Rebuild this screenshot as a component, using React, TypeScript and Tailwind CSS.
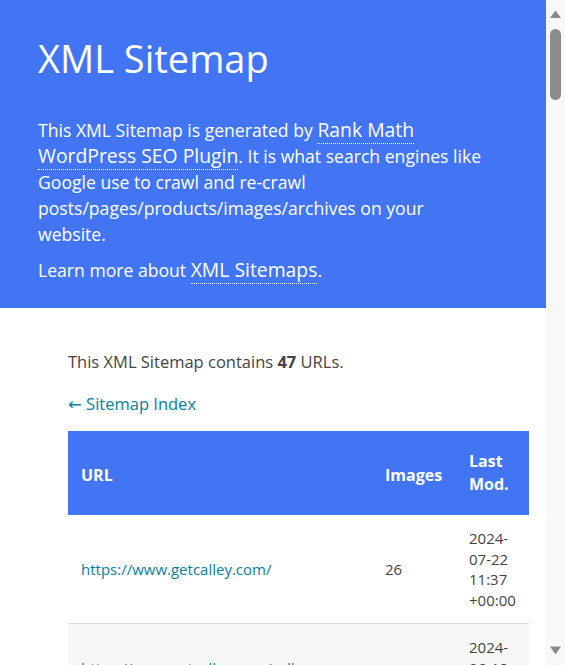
const urls: [string, number, string][] = [
  ["https://www.getcalley.com/", 26, "2024-07-22 11:37 +00:00"],
  ["https://www.getcalley.com/calley-autodialer-features/", 14, "2024-06-18 09:12 +00:00"],
  ["https://www.getcalley.com/pricing/", 3, "2024-07-10 07:45 +00:00"],
  ["https://www.getcalley.com/features/", 18, "2024-05-29 12:03 +00:00"],
  ["https://www.getcalley.com/contact-us/", 2, "2024-04-16 10:21 +00:00"],
  ["https://www.getcalley.com/about-us/", 6, "2024-04-16 10:24 +00:00"],
  ["https://www.getcalley.com/power-dialer/", 9, "2024-06-02 08:50 +00:00"],
  ["https://www.getcalley.com/call-center-software/", 11, "2024-06-05 14:16 +00:00"],
  ["https://www.getcalley.com/cold-calling-software/", 8, "2024-05-11 06:33 +00:00"],
  ["https://www.getcalley.com/telecalling-software/", 7, "2024-05-14 11:09 +00:00"],
  ["https://www.getcalley.com/call-tracking/", 5, "2024-03-27 13:42 +00:00"],
  ["https://www.getcalley.com/call-recording/", 4, "2024-03-27 13:48 +00:00"],
  ["https://www.getcalley.com/lead-management/", 6, "2024-03-30 09:55 +00:00"],
  ["https://www.getcalley.com/sales-dialer/", 7, "2024-02-19 07:14 +00:00"],
  ["https://www.getcalley.com/auto-dialer-for-android/", 10, "2024-02-22 10:38 +00:00"],
  ["https://www.getcalley.com/auto-dialer-for-iphone/", 9, "2024-02-22 10:41 +00:00"],
  ["https://www.getcalley.com/whatsapp-integration/", 5, "2024-01-30 12:27 +00:00"],
  ["https://www.getcalley.com/zapier-integration/", 4, "2024-01-30 12:31 +00:00"],
  ["https://www.getcalley.com/api-documentation/", 1, "2024-01-12 08:02 +00:00"],
  ["https://www.getcalley.com/team-management/", 6, "2024-01-08 15:19 +00:00"],
  ["https://www.getcalley.com/reports-and-analytics/", 8, "2023-12-21 09:47 +00:00"],
  ["https://www.getcalley.com/call-scripts/", 3, "2023-12-14 11:26 +00:00"],
  ["https://www.getcalley.com/voicemail-drop/", 3, "2023-12-14 11:30 +00:00"],
  ["https://www.getcalley.com/sms-and-email/", 4, "2023-11-28 06:58 +00:00"],
  ["https://www.getcalley.com/real-estate/", 5, "2023-11-20 10:12 +00:00"],
  ["https://www.getcalley.com/insurance/", 5, "2023-11-20 10:15 +00:00"],
  ["https://www.getcalley.com/education/", 5, "2023-11-20 10:18 +00:00"],
  ["https://www.getcalley.com/healthcare/", 4, "2023-11-20 10:21 +00:00"],
  ["https://www.getcalley.com/banking-and-finance/", 4, "2023-11-20 10:24 +00:00"],
  ["https://www.getcalley.com/customer-stories/", 12, "2023-10-31 13:05 +00:00"],
  ["https://www.getcalley.com/faq/", 1, "2023-10-17 07:36 +00:00"],
  ["https://www.getcalley.com/help-center/", 2, "2023-10-17 07:40 +00:00"],
  ["https://www.getcalley.com/video-tutorials/", 15, "2023-10-09 12:53 +00:00"],
  ["https://www.getcalley.com/download/", 2, "2023-09-25 09:08 +00:00"],
  ["https://www.getcalley.com/free-trial/", 1, "2023-09-25 09:11 +00:00"],
  ["https://www.getcalley.com/partner-program/", 3, "2023-09-12 14:27 +00:00"],
  ["https://www.getcalley.com/affiliate-program/", 3, "2023-09-12 14:30 +00:00"],
  ["https://www.getcalley.com/careers/", 2, "2023-08-29 08:44 +00:00"],
  ["https://www.getcalley.com/blog/", 0, "2023-08-16 11:02 +00:00"],
  ["https://www.getcalley.com/compare/", 6, "2023-08-03 10:19 +00:00"],
  ["https://www.getcalley.com/integrations/", 9, "2023-07-24 12:40 +00:00"],
  ["https://www.getcalley.com/security/", 1, "2023-07-11 07:57 +00:00"],
  ["https://www.getcalley.com/privacy-policy/", 0, "2023-06-28 06:15 +00:00"],
  ["https://www.getcalley.com/terms-of-service/", 0, "2023-06-28 06:18 +00:00"],
  ["https://www.getcalley.com/refund-policy/", 0, "2023-06-28 06:21 +00:00"],
  ["https://www.getcalley.com/gdpr/", 0, "2023-06-28 06:24 +00:00"],
  ["https://www.getcalley.com/sitemap/", 0, "2023-06-15 09:33 +00:00"],
]

function Scrollbar() {
  return (
    <div className="flex w-[19px] shrink-0 flex-col bg-[#f8f8f8]">
      <svg width="19" height="19" viewBox="0 0 19 19" className="shrink-0">
        <polygon points="4,18 15,18 9.5,10.5" fill="#8a8a8a" />
      </svg>
      <div className="ml-[4px] mt-[10px] h-[71px] w-[11px] rounded-full bg-[#8b8b8b]" />
      <div className="flex-1" />
      <svg width="19" height="19" viewBox="0 0 19 19" className="shrink-0">
        <polygon points="4,0.5 15,0.5 9.5,8.5" fill="#8a8a8a" />
      </svg>
    </div>
  )
}

export default function App() {
  return (
    <div className="flex h-[665px] overflow-hidden bg-white font-['Open_Sans','Noto_Sans',sans-serif] text-[#444]">
      <div className="w-[546px] shrink-0 overflow-hidden">
        {/* Description */}
        <div className="bg-[#4275f4] pl-[38px] pr-[58px] pt-[33px] pb-[25px] text-white">
          <h1 className="text-[38px] font-normal leading-[50px]">XML Sitemap</h1>
          <p className="mt-[34px] text-[17.6px] leading-[26px]">
            This XML Sitemap is generated by{" "}
            <a href="#" className="border-b border-dotted border-white text-[19.36px] leading-[24px]">
              Rank Math WordPress SEO Plugin
            </a>
            . It is what search engines like Google use to crawl and re-crawl
            posts/pages/products/images/archives on your website.
          </p>
          <p className="mt-[10px] text-[17.6px] leading-[26px]">
            Learn more about{" "}
            <a href="#" className="border-b border-dotted border-white text-[19.36px] leading-[24px]">
              XML Sitemaps
            </a>
            .
          </p>
        </div>

        {/* Content */}
        <div className="pl-[68px] pt-[43px] pb-[30px]">
          <p className="text-[16.5px] leading-[22px]">
            This XML Sitemap contains <strong className="font-bold">47</strong> URLs.
          </p>
          <p className="mt-[20px] text-[16.5px] leading-[22px]">
            <a href="#" className="text-[#05809e]">
              <span className="font-['DejaVu_Sans',sans-serif]">←</span> Sitemap Index
            </a>
          </p>

          <table className="mt-[15px] w-[461px] table-fixed border-collapse text-left">
            <colgroup>
              <col className="w-[304px]" />
              <col className="w-[84px]" />
              <col className="w-[73px]" />
            </colgroup>
            <thead>
              <tr className="bg-[#4275f4] text-white">
                <th className="h-[84px] px-[13px] pt-[4px] align-middle text-[16px] font-bold leading-[23px]">URL</th>
                <th className="h-[84px] px-[13px] pt-[4px] align-middle text-[16px] font-bold leading-[23px]">Images</th>
                <th className="h-[84px] px-[13px] align-middle text-[16px] font-bold leading-[23px]">Last Mod.</th>
              </tr>
            </thead>
            <tbody className="text-[15px] leading-[20.5px]">
              {urls.map(([loc, images, mod]) => (
                <tr key={loc} className="border-b border-[#ddd] even:bg-[#f7f7f7]">
                  <td className="px-[13px] py-[13px] align-middle">
                    <a href="#" className="block text-[#05809e]">
                      {loc}
                    </a>
                  </td>
                  <td className="px-[13px] py-[13px] align-middle">{images}</td>
                  <td className="px-[13px] py-[13px] align-middle">{mod}</td>
                </tr>
              ))}
            </tbody>
          </table>
        </div>
      </div>
      <Scrollbar />
    </div>
  )
}
